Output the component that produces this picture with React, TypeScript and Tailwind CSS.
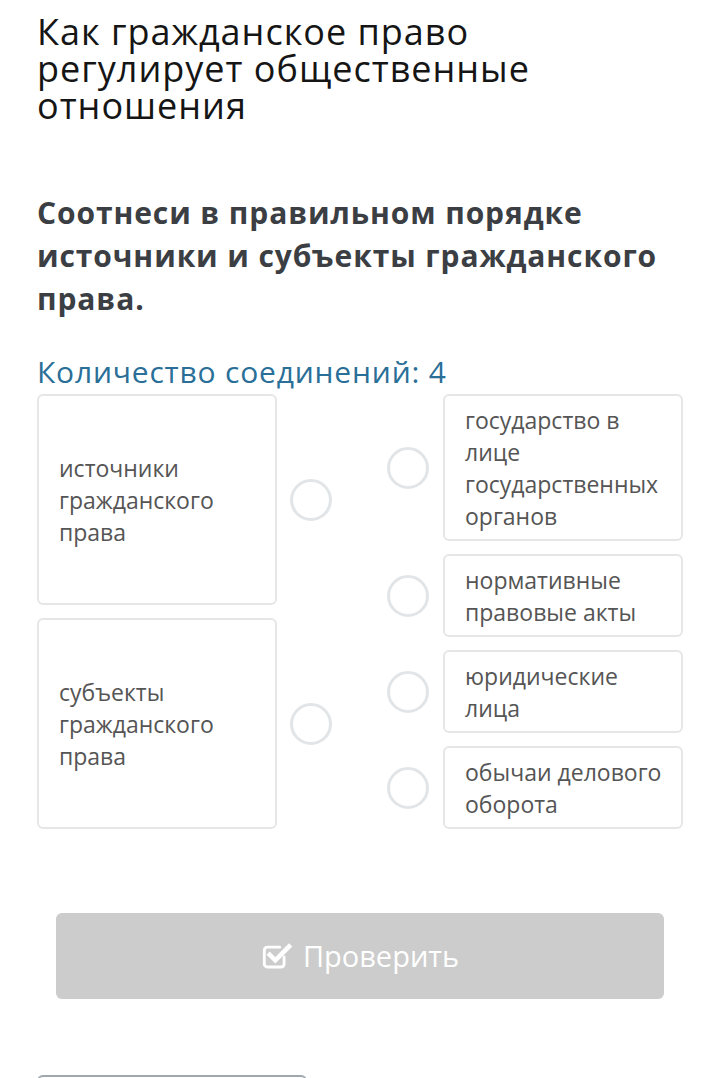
const font = { fontFamily: '"Open Sans", "Noto Sans", sans-serif' }

const LEFT = ['источники гражданского права', 'субъекты гражданского права']

const RIGHT = [
  'государство в лице государственных органов',
  'нормативные правовые акты',
  'юридические лица',
  'обычаи делового оборота',
]

function Dot() {
  return <div className="w-[42px] h-[42px] shrink-0 rounded-full border-[3px] border-[#e2e5e8] bg-white" />
}

// check-square-o (fa4 style)
function CheckSquare() {
  return (
    <svg width="33" height="31" viewBox="0 0 30 28" fill="none">
      <path
        d="M21 14.5V20.5C21 22.4 19.9 23.5 18 23.5H6C4.1 23.5 3 22.4 3 20.5V8.5C3 6.6 4.1 5.5 6 5.5H17"
        stroke="white"
        strokeWidth="2.6"
        strokeLinecap="round"
      />
      <path d="M8 12.5L13 17.5L25.5 5" stroke="white" strokeWidth="4.2" strokeLinecap="square" />
    </svg>
  )
}

export default function App() {
  return (
    <div className="min-h-[1078px] bg-white pl-[37px] pr-[24px] pt-[13px] overflow-hidden" style={font}>
      <h1 className="text-[36px] leading-[37px] tracking-[1px] text-[#151515] font-normal">
        Как гражданское право
        <br />
        регулирует общественные
        <br />
        отношения
      </h1>

      <p className="mt-[67px] text-[30px] leading-[43px] tracking-[0.9px] font-bold text-[#3b3e43]">
        Соотнеси в правильном порядке источники и субъекты гражданского права.
      </p>

      <div className="mt-[34px] text-[30px] leading-[36px] tracking-[0.8px] text-[#2a6f97]">Количество соединений: 4</div>

      {/* соединения */}
      <div className="mt-[4px] flex items-stretch">
        <div className="flex flex-col gap-[13px]">
          {LEFT.map((t) => (
            <div key={t} className="flex-1 flex items-center">
              <div className="w-[240px] h-full flex items-center rounded-[6px] border-2 border-[#e6e6e6] px-[20px] text-[23px] leading-[32px] text-[#555]">
                {t}
              </div>
              <div className="ml-[13px]">
                <Dot />
              </div>
            </div>
          ))}
        </div>

        <div className="ml-[55px] flex flex-col gap-[13px]">
          {RIGHT.map((t) => (
            <div key={t} className="flex items-center">
              <Dot />
              <div className="ml-[14px] w-[240px] rounded-[6px] border-2 border-[#e6e6e6] pl-[20px] pr-[12px] py-[7.5px] text-[23px] leading-[32px] text-[#555]">
                {t}
              </div>
            </div>
          ))}
        </div>
      </div>

      <button className="mt-[84px] mx-[19px] w-[608px] h-[86px] rounded-[6px] bg-[#cccccc] flex items-center justify-center gap-[9px] text-white text-[29px]">
        <CheckSquare />
        <span>Проверить</span>
      </button>

      <div className="mt-[76px] w-[270px] h-[40px] rounded-[6px] border-2 border-[#a0a8ad]" />
    </div>
  )
}
